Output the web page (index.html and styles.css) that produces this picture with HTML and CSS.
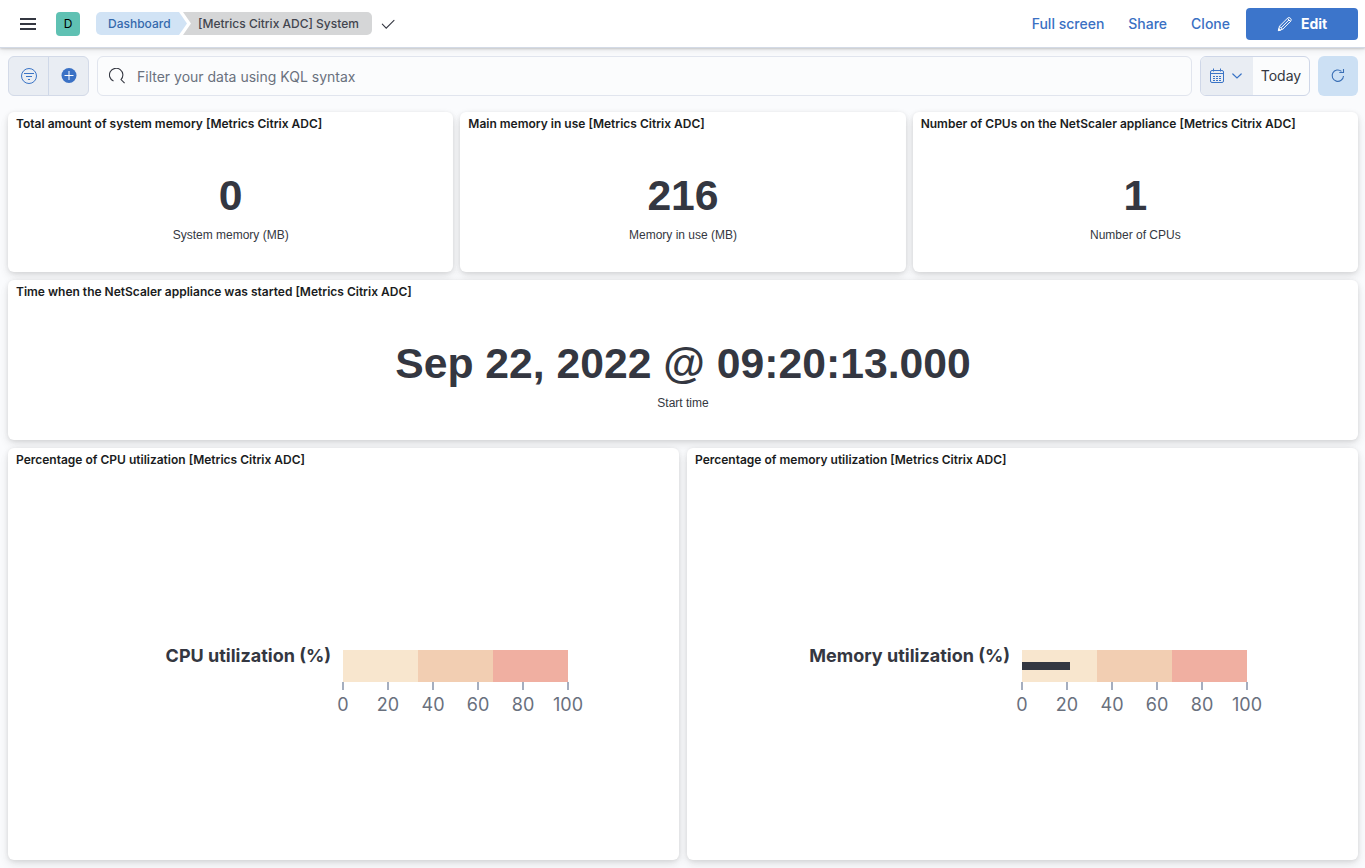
FILE: index.html
```html
<!DOCTYPE html>
<html lang="en">
<head>
<meta charset="utf-8">
<title>[Metrics Citrix ADC] System</title>
<link rel="stylesheet" href="styles.css">
</head>
<body>
<header class="header">
  <button class="menu" aria-label="Menu"><svg width="16" height="16" viewBox="0 0 16 16"><path d="M0 2h16v2H0zM0 7h16v2H0zM0 12h16v2H0z" fill="#343741"/></svg></button>
  <span class="space">D</span>
  <nav class="crumbs">
    <a class="crumb crumb-link">Dashboard</a>
    <span class="crumb crumb-current">[Metrics Citrix ADC] System</span>
  </nav>
  <svg class="check" width="16" height="16" viewBox="0 0 16 16"><path d="M2.3 8.2l3.9 3.9 7.8-7.7" fill="none" stroke="#343741" stroke-width="1.1" stroke-linecap="round"/></svg>
  <div class="actions">
    <a class="action">Full screen</a>
    <a class="action">Share</a>
    <a class="action">Clone</a>
    <button class="edit"><svg width="16" height="16" viewBox="0 0 16 16" fill="none" stroke="#fff" stroke-width="1" stroke-linejoin="round"><path d="M1.5 14.500l1-4.300 8-8q1.500-1.300 3 .1 1.500 1.500.1 3l-8 8zM2.600 10.300l3 3M4.100 11.800l7.800-7.800M10.400 2.400l3.100 3.100"/><path d="M1.300 14.700l.5-2.200 1.700 1.700z" fill="#fff"/></svg><span>Edit</span></button>
  </div>
</header>
<section class="query">
  <div class="filters">
    <button class="filter-btn"><svg width="16" height="16" viewBox="0 0 16 16" fill="none" stroke="#3a74c6"><circle cx="8" cy="8" r="7.500"/><path d="M3 5.500h10M5 8.500h6M7 11.500h2"/></svg></button>
    <button class="filter-btn"><svg width="16" height="16" viewBox="0 0 16 16"><circle cx="8" cy="7.500" r="7.500" fill="#3a71c5"/><path d="M3.500 7.500h9M8 3v9" stroke="#fff" stroke-width="1"/></svg></button>
  </div>
  <div class="search">
    <svg width="16" height="16" viewBox="0 0 16 16" fill="none" stroke="#343741" stroke-width="1.100"><path d="M4.500 13.100A6.700 6.700 0 1 1 12 11.600L15.600 15.200"/></svg>
    <span>Filter your data using KQL syntax</span>
  </div>
  <div class="dates">
    <div class="quick">
      <svg width="16" height="16" viewBox="0 0 16 16" fill="none" stroke="#3a74c6"><rect x="1.500" y="2.500" width="13" height="12" rx="1.500"/><path d="M4.500 .5v3M11.500 .5v3M1.500 5.500h13"/><path d="M4 8.500h9M4 10.500h9M4 12.500h9" stroke-dasharray="2 1"/></svg>
      <svg width="16" height="16" viewBox="0 0 16 16" fill="none" stroke="#3a74c6" stroke-width="1.200" stroke-linecap="round"><path d="M3.800 6l4.200 4 4.200-4"/></svg>
    </div>
    <span class="today">Today</span>
  </div>
  <button class="refresh"><svg width="16" height="16" viewBox="0 0 16 16" fill="none" stroke="#3a6fb5" stroke-width="1.100"><path d="M11.500 3.300A5.700 5.700 0 1 0 13.500 8M9.300 4.500h4.200V1"/></svg></button>
</section>
<main class="board">
  <div class="row thirds">
    <article class="panel"><h2>Total amount of system memory [Metrics Citrix ADC]</h2><div class="metric"><strong>0</strong><span>System memory (MB)</span></div></article>
    <article class="panel"><h2>Main memory in use [Metrics Citrix ADC]</h2><div class="metric"><strong>216</strong><span>Memory in use (MB)</span></div></article>
    <article class="panel"><h2>Number of CPUs on the NetScaler appliance [Metrics Citrix ADC]</h2><div class="metric"><strong>1</strong><span>Number of CPUs</span></div></article>
  </div>
  <article class="panel"><h2>Time when the NetScaler appliance was started [Metrics Citrix ADC]</h2><div class="metric"><strong class="date">Sep 22, 2022 @ 09:20:13.000</strong><span>Start time</span></div></article>
  <div class="row halves">
    <article class="panel"><h2>Percentage of CPU utilization [Metrics Citrix ADC]</h2>
      <div class="bullet"><span class="label">CPU utilization (%)</span>
        <div class="scale"><div class="bands"><i></i><i></i><i></i></div>
          <div class="ticks"><span>0</span><span>20</span><span>40</span><span>60</span><span>80</span><span>100</span></div></div></div>
    </article>
    <article class="panel"><h2>Percentage of memory utilization [Metrics Citrix ADC]</h2>
      <div class="bullet"><span class="label">Memory utilization (%)</span>
        <div class="scale"><div class="bands"><i></i><i></i><i></i><b class="value" style="width:21.2%"></b></div>
          <div class="ticks"><span>0</span><span>20</span><span>40</span><span>60</span><span>80</span><span>100</span></div></div></div>
    </article>
  </div>
</main>
</body>
</html>
```
FILE: styles.css
```css
* { box-sizing: border-box; }
body { margin: 0; width: 1365px; height: 868px; overflow: hidden; display: flex; flex-direction: column; background: #fafbfd; font-family: Inter, "Liberation Sans", sans-serif; color: #343741; }
button { border: 0; padding: 0; margin: 0; font: inherit; background: none; display: flex; align-items: center; justify-content: center; }
svg { display: block; flex: none; }
.header { position: relative; height: 48px; flex: none; display: flex; align-items: center; padding: 0 7px 0 20px; background: #fff; border-bottom: 1px solid #d3dae6; box-shadow: 0 1px 2px rgba(0,0,0,.16), 0 2px 7px rgba(0,0,0,.09); }
.space { width: 24px; height: 24px; margin-left: 20px; border-radius: 4px; background: #5fc1b3; color: #000; font-size: 12px; line-height: 24px; text-align: center; }
.crumbs { display: flex; margin-left: 16px; font-size: 12px; line-height: 23px; }
.crumb { height: 23px; white-space: nowrap; }
.crumb-link { width: 91px; padding-left: 12px; background: #d1e3f5; color: #3569ac; font-weight: 500; border-radius: 5px 0 0 5px; clip-path: polygon(0 0, 83px 0, 100% 50%, 83px 100%, 0 100%); }
.crumb-current { width: 189px; margin-left: -4px; padding-left: 15px; background: #d5d6d7; color: #42454f; font-weight: 500; border-radius: 0 5px 5px 0; clip-path: polygon(0 0, 100% 0, 100% 100%, 0 100%, 8px 50%); }
.check { margin-left: 8px; }
.actions { margin-left: auto; display: flex; align-items: center; gap: 24px; font-size: 14px; font-weight: 500; color: #3a70c3; }
.edit { width: 112px; height: 32px; margin-left: -8px; gap: 8px; border-radius: 4px; background: #3c75cb; color: #fff; font-weight: 700; }
.query { height: 64px; flex: none; display: flex; padding: 8px 7px 16px 8px; font-size: 14px; }
.filters { width: 81px; height: 40px; display: flex; border: 1px solid #d3dae8; border-radius: 6px; background: #e9edf3; }
.filter-btn { flex: 1; }
.filter-btn + .filter-btn { border-left: 1px solid #cfd8e8; }
.search { flex: 1; height: 40px; margin: 0 8px; padding: 0 11px; display: flex; align-items: center; gap: 12px; border: 1px solid #e1e5ee; border-radius: 6px; background: #fbfcfd; color: #6a717d; }
.dates { width: 110px; height: 40px; display: flex; border: 1px solid #cfd7e8; border-radius: 6px; overflow: hidden; background: #fbfcfd; }
.quick { width: 52px; display: flex; align-items: center; gap: 4px; padding-left: 8px; background: #e9edf3; }
.today { flex: 1; line-height: 38px; text-align: center; }
.refresh { width: 40px; height: 40px; margin-left: 8px; border-radius: 6px; background: #cce0f4; }
.board { flex: 1; display: grid; grid-template-rows: 160px 160px 412px; gap: 8px; padding: 0 7px 8px 8px; }
.row { display: grid; gap: 8px; }
.thirds { grid-template-columns: repeat(3, 1fr); column-gap: 7px; }
.halves { grid-template-columns: 1fr 1fr; }
.panel { min-width: 0; display: flex; flex-direction: column; background: #fff; border-radius: 6px; box-shadow: 0 1px 4px rgba(0,0,0,.08), 0 3px 9px rgba(0,0,0,.08), 0 6px 13px rgba(0,0,0,.04); }
.panel h2 { margin: 0; height: 24px; padding-left: 8px; font-size: 12px; line-height: 24px; font-weight: 600; color: #1a1c21; white-space: nowrap; }
.metric { flex: 1; display: flex; flex-direction: column; align-items: center; padding-top: 34px; font-size: 12px; line-height: 18px; font-family: "Liberation Sans", Arial, sans-serif; }
.metric strong { height: 56px; font-size: 42.7px; line-height: 50px; }
.bullet { display: flex; justify-content: flex-end; padding: 178px 111px 0 0; }
.label { margin-right: 12px; font-size: 18px; line-height: 12px; font-weight: 700; white-space: nowrap; }
.scale { width: 225px; }
.bands { position: relative; height: 32px; display: grid; grid-template-columns: repeat(3, 1fr); }
.bands i { background: #f8e6ce; }
.bands i:nth-child(2) { background: #f2ceb2; }
.bands i:nth-child(3) { background: #f0afa1; }
.value { position: absolute; left: 0; top: 12px; height: 8px; background: #343741; }
.ticks { display: flex; justify-content: space-between; margin: 0 -22.5px; font-size: 18px; line-height: 30px; color: #69707d; }
.ticks span { width: 45px; display: flex; flex-direction: column; align-items: center; }
.ticks span::before { content: ""; width: 2px; height: 8px; background: #a5aebf; }
```
